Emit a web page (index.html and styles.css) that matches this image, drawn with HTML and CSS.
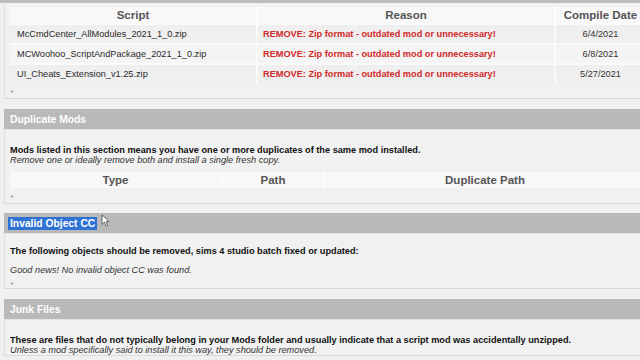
FILE: index.html
```html
<!DOCTYPE html>
<html>
<head>
<meta charset="utf-8">
<link rel="stylesheet" href="styles.css">
</head>
<body>
<div class="topbar"></div>
<div class="page">
  <section class="section">
    <div class="sec-body first">
      <div class="tablewrap">
        <table class="tbl scripts">
          <colgroup><col class="c1"><col class="c2"><col class="c3"></colgroup>
          <thead><tr><th>Script</th><th>Reason</th><th>Compile Date</th></tr></thead>
          <tbody>
            <tr><td>McCmdCenter_AllModules_2021_1_0.zip</td><td class="red">REMOVE: Zip format - outdated mod or unnecessary!</td><td class="date">6/4/2021</td></tr>
            <tr><td>MCWoohoo_ScriptAndPackage_2021_1_0.zip</td><td class="red">REMOVE: Zip format - outdated mod or unnecessary!</td><td class="date">6/8/2021</td></tr>
            <tr><td>UI_Cheats_Extension_v1.25.zip</td><td class="red">REMOVE: Zip format - outdated mod or unnecessary!</td><td class="date">5/27/2021</td></tr>
          </tbody>
        </table>
      </div>
      <div class="scroll"><span class="arrow">&#9666;</span></div>
    </div>
  </section>

  <section class="section dup">
    <div class="sec-head">Duplicate Mods</div>
    <div class="sec-body">
      <p class="desc"><b>Mods listed in this section means you have one or more duplicates of the same mod installed.</b><br><i>Remove one or ideally remove both and install a single fresh copy.</i></p>
      <div class="tablewrap">
        <table class="tbl dups">
          <colgroup><col class="d1"><col class="d2"><col class="d3"></colgroup>
          <thead><tr><th>Type</th><th>Path</th><th>Duplicate Path</th></tr></thead>
        </table>
      </div>
      <div class="scroll"><span class="arrow">&#9666;</span></div>
    </div>
  </section>

  <section class="section inv">
    <div class="sec-head"><span class="sel">Invalid Object CC</span>
      <svg class="cursor" width="9" height="13" viewBox="0 0 10 15"><path d="M1 1 L1 12 L3.8 9.4 L5.8 14 L7.6 13.2 L5.7 8.8 L9.2 8.6 Z" fill="#fff" stroke="#444" stroke-width="0.9"/></svg>
    </div>
    <div class="sec-body">
      <p class="desc"><b>The following objects should be removed, sims 4 studio batch fixed or updated:</b></p>
      <p class="desc good"><i>Good news! No invalid object CC was found.</i></p>
      <div class="scroll short"><span class="arrow">&#9666;</span></div>
    </div>
  </section>

  <section class="section">
    <div class="sec-head">Junk Files</div>
    <div class="sec-body">
      <p class="desc"><b>These are files that do not typically belong in your Mods folder and usually indicate that a script mod was accidentally unzipped.</b><br><i>Unless a mod specifically said to install it this way, they should be removed.</i></p>
    </div>
  </section>
</div>
</body>
</html>
```
FILE: styles.css
```css
html, body {
  margin: 0;
  padding: 0;
  width: 640px;
  height: 360px;
  overflow: hidden;
  background: #f0f0f0;
  font-family: "Liberation Sans", Arial, sans-serif;
}
.topbar {
  height: 3px;
  background: #bcbcbc;
}
.page {
  padding-left: 4px;
}
.section {
  margin-bottom: 10px;
}
.section.dup {
  margin-bottom: 9px;
}
.sec-head {
  position: relative;
  height: 20px;
  background: #b9b9b9;
  border-bottom: 1px solid #e4e4e4;
  color: #fff;
  font-weight: bold;
  font-size: 10.3px;
  padding-left: 6px;
  display: flex;
  align-items: center;
}
.sel {
  background: #2f72d6;
  margin-left: -2px;
  padding: 1px 2px;
}
.cursor {
  position: absolute;
  left: 97px;
  top: 1px;
}
.sec-body {
  background: #f1f1f1;
  border-left: 1px solid #dedede;
  border-bottom: 1px solid #dadada;
  padding: 15px 0 0 5px;
}
.inv .sec-body {
  padding-top: 12px;
}
.sec-body.first {
  padding-top: 4px;
}
.desc {
  margin: 0;
  font-size: 9.2px;
  line-height: 10px;
  color: #111;
}
.desc i {
  color: #333;
}
.desc.good {
  margin-top: 9px;
}
.tablewrap {
  overflow: hidden;
}
.desc + .tablewrap {
  margin-top: 7px;
}
.tbl {
  border-collapse: collapse;
  table-layout: fixed;
  width: 635px;
}
.c1 { width: 247px; }
.c2 { width: 298px; }
.c3 { width: 90px; }
.d1 { width: 212px; }
.d2 { width: 102px; }
.d3 { width: 321px; }
.tbl th {
  height: 16px;
  padding: 0;
  background: #f8f8f8;
  color: #555;
  font-size: 11.5px;
  font-weight: bold;
  text-align: center;
  border-left: 2px solid #fdfdfd;
}
.tbl th:first-child, .tbl td:first-child {
  border-left: none;
}
.tbl td {
  height: 18px;
  padding: 0 0 0 7px;
  background: #efefef;
  border-top: 2px solid #fafafa;
  border-left: 2px solid #fafafa;
  font-size: 9.2px;
  color: #2a2a2a;
  white-space: nowrap;
}
.tbl tbody tr:nth-child(2) td {
  background: #f4f4f4;
}
.tbl td.red {
  color: #d12a2a;
  font-weight: bold;
  padding-left: 5px;
}
.tbl td.date {
  text-align: center;
  padding-left: 0;
  color: #333;
}
.scroll {
  height: 15px;
  position: relative;
}
.scroll.short {
  height: 13px;
}
.arrow {
  position: absolute;
  left: 0;
  top: 5px;
  font-size: 6px;
  line-height: 6px;
  color: #aaa;
}
```
